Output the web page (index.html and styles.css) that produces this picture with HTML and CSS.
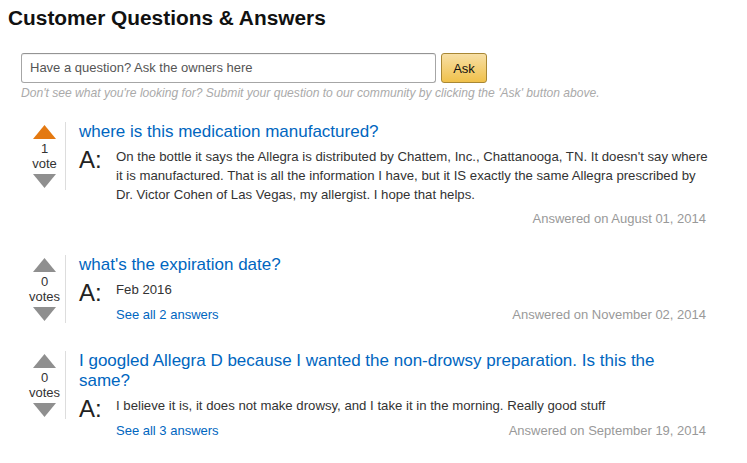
FILE: index.html
```html
<!DOCTYPE html>
<html>
<head>
<meta charset="utf-8">
<link rel="stylesheet" href="styles.css">
</head>
<body>
<div class="page">
  <h1 class="title">Customer Questions &amp; Answers</h1>
  <div class="ask">
    <div class="ask-row">
      <div class="ask-input">Have a question? Ask the owners here</div>
      <button class="ask-btn">Ask</button>
    </div>
    <div class="ask-hint">Don't see what you're looking for? Submit your question to our community by clicking the 'Ask' button above.</div>
  </div>

  <div class="qlist">
    <div class="q">
      <div class="votes">
        <svg class="arrow" width="23" height="14" viewBox="0 0 23 14"><polygon points="11.5,0 23,14 0,14" fill="#e47911"/></svg>
        <div class="count">1<br>vote</div>
        <svg class="arrow" width="23" height="14" viewBox="0 0 23 14"><polygon points="0,0 23,0 11.5,14" fill="#8f8f8f"/></svg>
      </div>
      <div class="qbody">
        <a class="qtitle">where is this medication manufactured?</a>
        <div class="answer">
          <div class="alabel">A:</div>
          <div class="atext">On the bottle it says the Allegra is distributed by Chattem, Inc., Chattanooga, TN. It doesn't say where it is manufactured. That is all the information I have, but it IS exactly the same Allegra prescribed by Dr. Victor Cohen of Las Vegas, my allergist. I hope that helps.</div>
        </div>
        <div class="afoot">
          <span class="seeall"></span>
          <span class="date">Answered on August 01, 2014</span>
        </div>
      </div>
    </div>

    <div class="q">
      <div class="votes">
        <svg class="arrow" width="23" height="14" viewBox="0 0 23 14"><polygon points="11.5,0 23,14 0,14" fill="#8f8f8f"/></svg>
        <div class="count">0<br>votes</div>
        <svg class="arrow" width="23" height="14" viewBox="0 0 23 14"><polygon points="0,0 23,0 11.5,14" fill="#8f8f8f"/></svg>
      </div>
      <div class="qbody">
        <a class="qtitle">what's the expiration date?</a>
        <div class="answer">
          <div class="alabel">A:</div>
          <div class="atext">Feb 2016</div>
        </div>
        <div class="afoot">
          <a class="seeall">See all 2 answers</a>
          <span class="date">Answered on November 02, 2014</span>
        </div>
      </div>
    </div>

    <div class="q">
      <div class="votes">
        <svg class="arrow" width="23" height="14" viewBox="0 0 23 14"><polygon points="11.5,0 23,14 0,14" fill="#8f8f8f"/></svg>
        <div class="count">0<br>votes</div>
        <svg class="arrow" width="23" height="14" viewBox="0 0 23 14"><polygon points="0,0 23,0 11.5,14" fill="#8f8f8f"/></svg>
      </div>
      <div class="qbody">
        <a class="qtitle">I googled Allegra D because I wanted the non-drowsy preparation. Is this the same?</a>
        <div class="answer">
          <div class="alabel">A:</div>
          <div class="atext">I believe it is, it does not make drowsy, and I take it in the morning. Really good stuff</div>
        </div>
        <div class="afoot">
          <a class="seeall">See all 3 answers</a>
          <span class="date">Answered on September 19, 2014</span>
        </div>
      </div>
    </div>
  </div>
</div>
</body>
</html>
```

FILE: styles.css
```css
* { box-sizing: border-box; }
html, body { margin: 0; padding: 0; background: #fff; }
body {
  font-family: "Liberation Sans", Arial, sans-serif;
  color: #333;
  width: 747px;
  height: 463px;
  overflow: hidden;
}
.page { padding: 6px 37px 0 8px; }
.title {
  margin: 0;
  font-size: 20.85px;
  line-height: 24px;
  font-weight: bold;
  color: #111;
}
.ask { margin: 23px 0 0 13px; }
.ask-row { display: flex; gap: 5px; }
.ask-input {
  width: 415px;
  height: 30px;
  border: 1px solid #a6a6a6;
  border-top-color: #949494;
  border-radius: 3px;
  padding: 0 8px;
  font-size: 13px;
  line-height: 28px;
  color: #555;
  box-shadow: inset 0 1px 0 rgba(0,0,0,0.05);
}
.ask-btn {
  width: 46px;
  height: 30px;
  border: 1px solid #a88734;
  border-radius: 3px;
  background: linear-gradient(#f7dfa5, #f0c14b);
  font-family: inherit;
  font-size: 13px;
  color: #111;
  padding: 0;
}
.ask-hint {
  margin-top: 3px;
  font-size: 12.1px;
  line-height: 15px;
  font-style: italic;
  color: #aaa;
}
.qlist { margin-top: 21px; padding-left: 16px; }
.q { display: flex; align-items: flex-start; margin-bottom: 27px; }
.votes {
  flex: none;
  width: 42px;
  padding: 3px 0 2px;
  border-right: 1px solid #ddd;
  display: flex;
  flex-direction: column;
  align-items: center;
}
.arrow { display: block; }
.count {
  padding: 2px 0 3px;
  font-size: 13px;
  line-height: 15px;
  text-align: center;
  color: #333;
}
.qbody { flex: 1; padding-left: 13px; }
.qtitle {
  display: block;
  padding-right: 20px;
  font-size: 17px;
  line-height: 20px;
  color: #0066c0;
  text-decoration: none;
}
.answer { display: flex; margin-top: 5px; padding-bottom: 3px; }
.alabel {
  flex: none;
  width: 37px;
  font-size: 24px;
  line-height: 20px;
  margin-top: 3px;
  margin-bottom: -3px;
  color: #222;
}
.atext {
  font-size: 13.2px;
  line-height: 19px;
  color: #333;
}
.afoot {
  display: flex;
  justify-content: space-between;
  margin-top: 2px;
  padding-left: 37px;
  padding-right: 4px;
  font-size: 13px;
  line-height: 19px;
}
.seeall { color: #0066c0; text-decoration: none; }
.date { color: #999; }
```
